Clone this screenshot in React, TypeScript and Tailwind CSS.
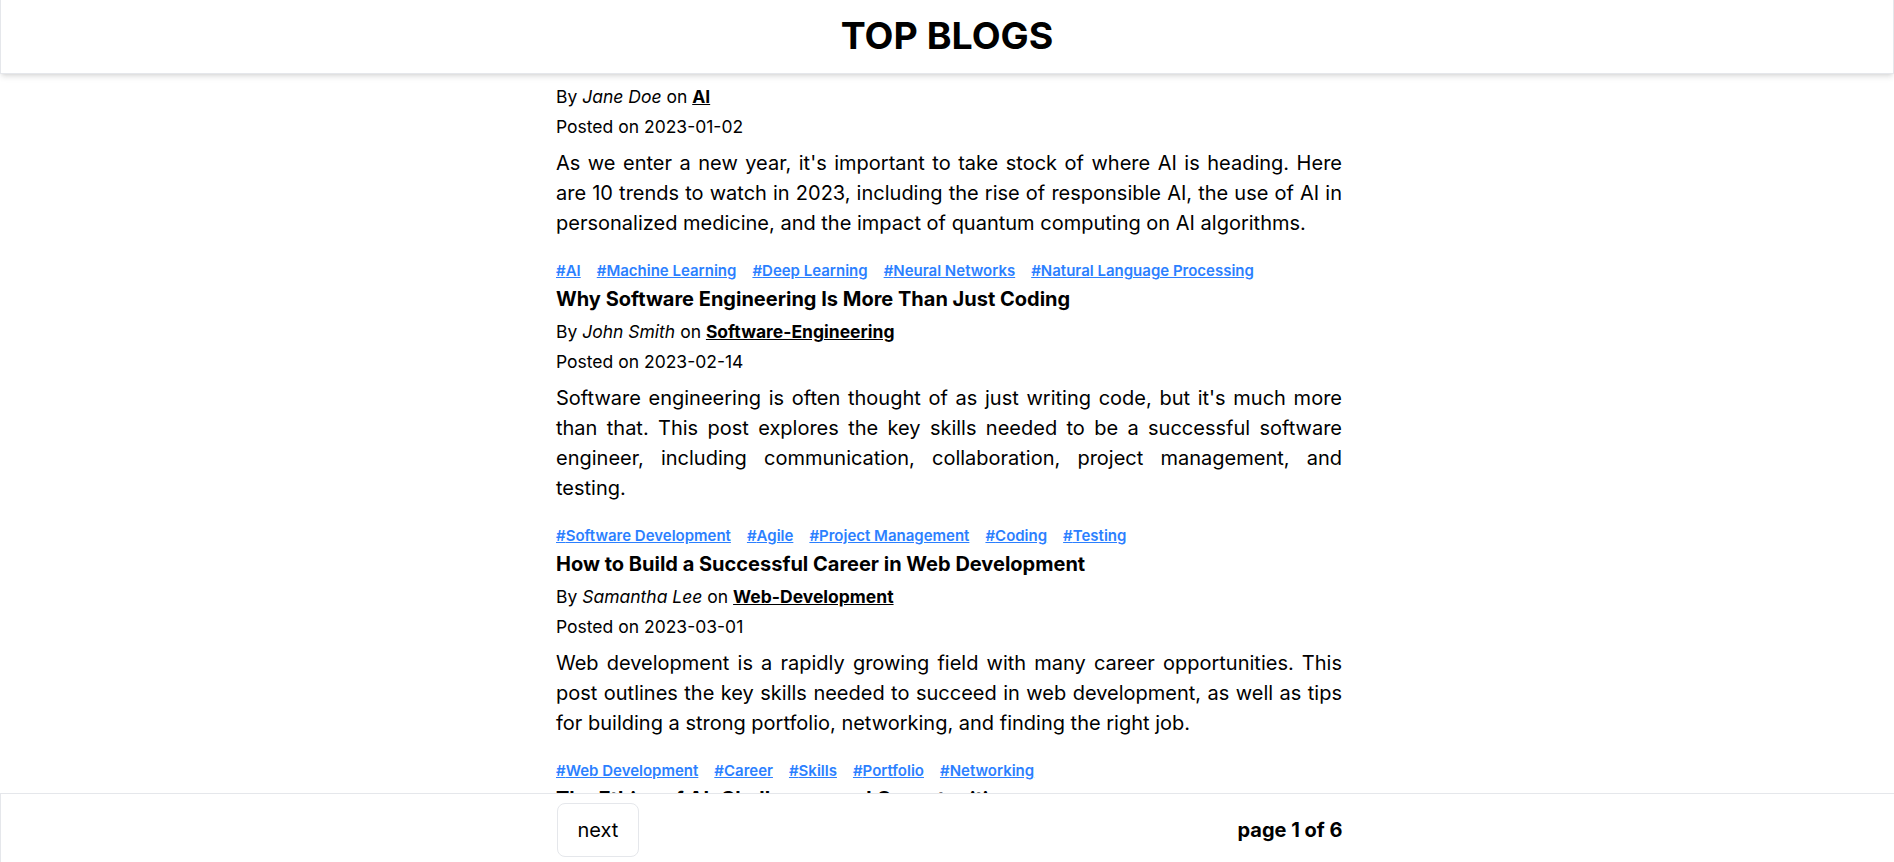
type Post = {
  title: string;
  author: string;
  category: string;
  date: string;
  body: string;
  tags: string[];
};

const posts: Post[] = [
  {
    title: "10 AI Trends to Watch in 2023",
    author: "Jane Doe",
    category: "AI",
    date: "2023-01-02",
    body: "As we enter a new year, it's important to take stock of where AI is heading. Here are 10 trends to watch in 2023, including the rise of responsible AI, the use of AI in personalized medicine, and the impact of quantum computing on AI algorithms.",
    tags: ["AI", "Machine Learning", "Deep Learning", "Neural Networks", "Natural Language Processing"],
  },
  {
    title: "Why Software Engineering Is More Than Just Coding",
    author: "John Smith",
    category: "Software-Engineering",
    date: "2023-02-14",
    body: "Software engineering is often thought of as just writing code, but it's much more than that. This post explores the key skills needed to be a successful software engineer, including communication, collaboration, project management, and testing.",
    tags: ["Software Development", "Agile", "Project Management", "Coding", "Testing"],
  },
  {
    title: "How to Build a Successful Career in Web Development",
    author: "Samantha Lee",
    category: "Web-Development",
    date: "2023-03-01",
    body: "Web development is a rapidly growing field with many career opportunities. This post outlines the key skills needed to succeed in web development, as well as tips for building a strong portfolio, networking, and finding the right job.",
    tags: ["Web Development", "Career", "Skills", "Portfolio", "Networking"],
  },
  {
    title: "The Ethics of AI: Challenges and Opportunities",
    author: "David Kim",
    category: "AI",
    date: "2023-03-15",
    body: "As AI becomes more powerful, questions about its ethical use grow more pressing. This post looks at bias, privacy and accountability in AI systems.",
    tags: ["AI", "Ethics", "Privacy"],
  },
];

function PostItem({ post, hideTitle }: { post: Post; hideTitle?: boolean }) {
  return (
    <article className="mt-1">
      {!hideTitle && (
        <h2 className="text-xl leading-7 font-bold text-black">{post.title}</h2>
      )}
      <p className={`${hideTitle ? "" : "mt-1"} text-[17.5px] leading-[30px] text-black`}>
        By <em>{post.author}</em> on{" "}
        <a href="#" className="font-bold underline">
          {post.category}
        </a>
      </p>
      <p className="text-[17.5px] leading-[30px] text-black">Posted on {post.date}</p>
      <p className="mt-1.5 text-xl leading-[30px] text-black text-justify">{post.body}</p>
      <div className="mt-[23px] flex gap-4 text-[15px] leading-5 font-semibold text-blue-500">
        {post.tags.map((t) => (
          <a key={t} href="#" className="underline">
            #{t}
          </a>
        ))}
      </div>
    </article>
  );
}

export default function App() {
  return (
    <div className="h-screen flex flex-col overflow-hidden bg-white font-['Inter',sans-serif] text-black">
      {/* header */}
      <header className="relative z-10 h-[74px] shrink-0 flex items-center justify-center bg-white border border-t-0 border-gray-200 shadow-md">
        <h1 className="text-[37.5px] font-bold">TOP BLOGS</h1>
      </header>

      {/* list */}
      <main className="flex-1 overflow-hidden">
        <div className="mx-auto w-[790px] pl-1 pt-1">
          {posts.map((p, i) => (
            <PostItem key={p.title} post={p} hideTitle={i === 0} />
          ))}
        </div>
      </main>

      {/* pager */}
      <footer className="h-[69px] shrink-0 bg-white border-t border-l border-gray-200">
        <div className="mx-auto w-[790px] pl-1 pt-1 h-full flex items-center justify-between">
          <button className="px-5 py-3 text-xl leading-7 border border-gray-200 rounded-lg bg-white">
            next
          </button>
          <span className="text-xl font-bold">page 1 of 6</span>
        </div>
      </footer>
    </div>
  );
}
